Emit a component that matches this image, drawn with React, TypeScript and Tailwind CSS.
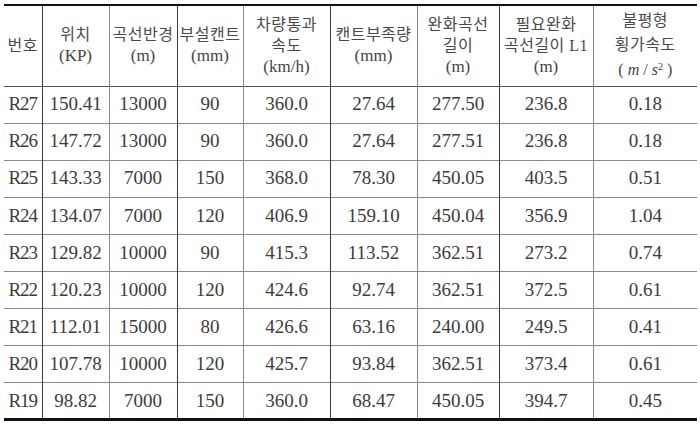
const rows = [
  ["R27", "150.41", "13000", "90", "360.0", "27.64", "277.50", "236.8", "0.18"],
  ["R26", "147.72", "13000", "90", "360.0", "27.64", "277.51", "236.8", "0.18"],
  ["R25", "143.33", "7000", "150", "368.0", "78.30", "450.05", "403.5", "0.51"],
  ["R24", "134.07", "7000", "120", "406.9", "159.10", "450.04", "356.9", "1.04"],
  ["R23", "129.82", "10000", "90", "415.3", "113.52", "362.51", "273.2", "0.74"],
  ["R22", "120.23", "10000", "120", "424.6", "92.74", "362.51", "372.5", "0.61"],
  ["R21", "112.01", "15000", "80", "426.6", "63.16", "240.00", "249.5", "0.41"],
  ["R20", "107.78", "10000", "120", "425.7", "93.84", "362.51", "373.4", "0.61"],
  ["R19", "98.82", "7000", "150", "360.0", "68.47", "450.05", "394.7", "0.45"],
];

// column widths and right-hand border colour (dark / gray alternating like the scan)
const cols = [
  { w: "w-[38px]", b: "border-r border-r-[#3a3a3a]" },
  { w: "w-[67px]", b: "border-r border-r-[#8a8a8a]" },
  { w: "w-[68px]", b: "border-r border-r-[#3a3a3a]" },
  { w: "w-[66px]", b: "border-r border-r-[#8a8a8a]" },
  { w: "w-[87px]", b: "border-r border-r-[#3a3a3a]" },
  { w: "w-[87px]", b: "border-r border-r-[#8a8a8a]" },
  { w: "w-[82px]", b: "border-r border-r-[#3a3a3a]" },
  { w: "w-[94px]", b: "border-r border-r-[#8a8a8a]" },
  { w: "w-[104px]", b: "" },
];

const Ko = ({ children }: { children: React.ReactNode }) => (
  <div className="text-[16px] leading-[21px] tracking-[0.5px] text-[#4a4a4a]">{children}</div>
);
const Unit = ({ children }: { children: React.ReactNode }) => (
  <div className="text-[17px] leading-[22px] text-[#444]">{children}</div>
);

const headers: React.ReactNode[] = [
  <Ko>번호</Ko>,
  <>
    <Ko>위치</Ko>
    <Unit>(KP)</Unit>
  </>,
  <>
    <Ko>곡선반경</Ko>
    <Unit>(m)</Unit>
  </>,
  <>
    <Ko>부설캔트</Ko>
    <Unit>(mm)</Unit>
  </>,
  <>
    <Ko>차량통과</Ko>
    <Ko>속도</Ko>
    <Unit>(km/h)</Unit>
  </>,
  <>
    <Ko>캔트부족량</Ko>
    <Unit>(mm)</Unit>
  </>,
  <>
    <Ko>완화곡선</Ko>
    <Ko>길이</Ko>
    <Unit>(m)</Unit>
  </>,
  <>
    <Ko>필요완화</Ko>
    <Ko>곡선길이 L1</Ko>
    <Unit>(m)</Unit>
  </>,
  <div className="flex flex-col gap-[3px]">
    <Ko>불평형</Ko>
    <Ko>횡가속도</Ko>
    <div className="text-[16px] leading-[22px] text-[#444] mt-[1px]">
      ( <i>m</i> / <i>s</i>
      <sup className="text-[10px]">2</sup> )
    </div>
  </div>,
];

export default function App() {
  return (
    <div className="w-[700px] h-[428px] bg-white pt-[4px] pl-[4px] font-['Liberation_Serif','Noto_Sans_CJK_KR',serif]">
      <table className="table-fixed border-collapse w-[693px] border-t-2 border-t-[#111] border-b-[3px] border-b-[#111]">
        <thead>
          <tr className="h-[81px] border-b border-b-[#555]">
            {headers.map((h, i) => (
              <th key={i} className={`${cols[i].w} ${cols[i].b} p-0 font-normal text-center align-middle whitespace-nowrap`}>
                {h}
              </th>
            ))}
          </tr>
        </thead>
        <tbody>
          {rows.map((r, ri) => (
            <tr key={ri} className={`h-[37.1px] ${ri < rows.length - 1 ? "border-b border-b-[#8a8a8a]" : ""}`}>
              {r.map((c, ci) => (
                <td key={ci} className={`${cols[ci].b} p-0 text-center align-middle text-[19px] text-[#3c3c3c] ${ci === 0 ? "tracking-[-1px]" : ""}`}>
                  {c}
                </td>
              ))}
            </tr>
          ))}
        </tbody>
      </table>
    </div>
  );
}
